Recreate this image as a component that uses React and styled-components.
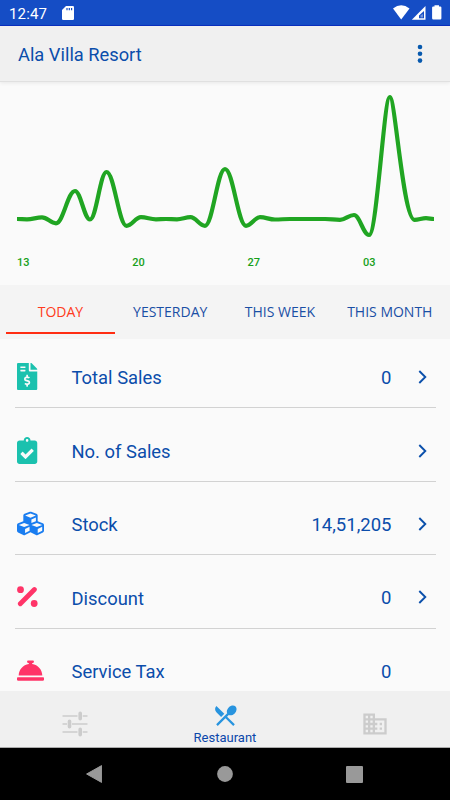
import React, { useState } from 'react';
import { FaClipboardCheck, FaConciergeBell, FaCubes, FaFileInvoiceDollar } from 'react-icons/fa';
import { MdBusiness, MdRestaurantMenu } from 'react-icons/md';
import styled, { createGlobalStyle } from 'styled-components';

const TABS = ['TODAY', 'YESTERDAY', 'THIS WEEK', 'THIS MONTH'];
const DATES = ['13', '20', '27', '03'];

// turning points of the sales curve: x, y, bend before, bend after
const POINTS = [
	[17, 137], [27, 137.3], [42, 135.4], [56, 141.3], [75, 109], [90, 137.5],
	[106.5, 90], [126.5, 143.8], [141, 135.2], [156, 137.3], [166, 137], [177, 137.3],
	[190.5, 135.2], [205, 143.8], [225, 87], [246, 143.8], [260, 135.2], [275, 137.5],
	[290, 137], [325, 137], [340, 137.9], [354, 133], [369, 153], [389.8, 15, 0.28, 0.22],
	[414.5, 137.8, 0.46], [426, 136.2], [434, 137],
];

const toPath = points =>
	points.reduce((path, [x, y, before = 0.38], i) => {
		if (i === 0) return `M${x} ${y}`;
		const [px, py, , after = 0.38] = points[i - 1];
		const dx = x - px;
		return `${path} C${px + dx * after} ${py} ${x - dx * before} ${y} ${x} ${y}`;
	}, '');

const PercentIcon = () => (
	<svg width="21" height="22" viewBox="0 0 21 22" fill="currentColor">
		<circle cx="3.5" cy="3.7" r="3.4" />
		<circle cx="17.2" cy="17.5" r="3.4" />
		<path d="M3.3 17.7 17.4 3.5" stroke="currentColor" strokeWidth="4.8" strokeLinecap="round" />
	</svg>
);

const SlidersIcon = () => (
	<svg width="26" height="26" viewBox="0 0 26 26" fill="none" stroke="currentColor">
		<path d="M.5 5H15.5M20.7 5H25.5M.5 13H5M10 13H25.5M.5 21H15.5M20.7 21H25.5" strokeWidth="1.5" />
		<path d="M18.2 2.2V7.8M7.5 10.2V15.8M18.2 18.2V23.8" strokeWidth="3.6" strokeLinecap="round" />
	</svg>
);

const iconProps = { size: 27, preserveAspectRatio: 'xMinYMid meet' };

const ROWS = [
	{ title: 'Total Sales', value: '0', color: '#1bc1ae', icon: <FaFileInvoiceDollar {...iconProps} />, arrow: true },
	{ title: 'No. of Sales', value: '', color: '#1bc1ae', icon: <FaClipboardCheck {...iconProps} />, arrow: true },
	{ title: 'Stock', value: '14,51,205', color: '#1a7df0', icon: <FaCubes {...iconProps} />, arrow: true },
	{ title: 'Discount', value: '0', color: '#ff3468', icon: <PercentIcon />, arrow: true },
	{ title: 'Service Tax', value: '0', color: '#ff3468', icon: <FaConciergeBell {...iconProps} />, arrow: false },
];

const GlobalStyle = createGlobalStyle`
	* {
		box-sizing: border-box;
	}
	body {
		margin: 0;
		font-family: Roboto, sans-serif;
	}
	svg {
		display: block;
		flex-shrink: 0;
	}
`;

const Screen = styled.div`
	width: 450px;
	height: 800px;
	display: flex;
	flex-direction: column;
	overflow: hidden;
	background: #fafafa;
	color: #0b4dab;
`;

const StatusBar = styled.div`
	height: 26px;
	flex-shrink: 0;
	display: flex;
	align-items: center;
	padding: 0 7px 0 9px;
	background: #154dc5;
	border-bottom: 1px solid #0a2fc0;
	color: #fff;
`;

const Clock = styled.span`
	width: 53px;
	font-size: 15px;
	line-height: 20px;
	padding-top: 2px;
	letter-spacing: 0.15px;
`;

const Signals = styled.svg`
	margin: 1px 0 0 auto;
`;

const AppBar = styled.header`
	position: relative;
	height: 56px;
	flex-shrink: 0;
	display: flex;
	align-items: center;
	justify-content: space-between;
	padding: 0 27px 0 18px;
	background: #f0f0f0;
	border-bottom: 1px solid #e0e0e0;
	box-shadow: 0 1px 4px rgba(0, 0, 0, 0.08);
`;

const Title = styled.h1`
	margin: 0;
	padding-top: 2px;
	font-size: 18.3px;
	line-height: 21px;
	font-weight: 400;
`;

const Chart = styled.section`
	height: 203px;
	flex-shrink: 0;
`;

const Dates = styled.div`
	display: flex;
	padding: 1px 0 0 17px;
`;

const DateLabel = styled.span`
	width: 115.3px;
	flex-shrink: 0;
	color: #17a01a;
	font-size: 11px;
	font-weight: 500;
	line-height: 16px;
`;

const Tabs = styled.nav`
	height: 54px;
	flex-shrink: 0;
	display: flex;
	padding: 0 5px 5px 5.5px;
	background: #f4f4f4;
`;

const Tab = styled.button`
	width: 109.8px;
	flex-shrink: 0;
	padding: 5px 0 0;
	border: 0;
	border-bottom: 2px solid ${({ $active }) => ($active ? '#ff2d12' : 'transparent')};
	background: none;
	color: ${({ $active }) => ($active ? '#ff3b20' : '#1a4fa5')};
	font-family: 'Open Sans', sans-serif;
	font-size: 14px;
	font-weight: 400;
	white-space: nowrap;
	cursor: pointer;
`;

const List = styled.div`
	flex: 1;
	min-height: 0;
	overflow: hidden;
	padding: 0 14px 0 15px;
`;

const Row = styled.div`
	height: 73.4px;
	display: flex;
	align-items: center;
	padding: 12px 0 0 2px;
	border-bottom: 1px solid #d2d2d2;

	&:first-child {
		height: 69.4px;
		padding-top: 7px;
	}
`;

const RowIcon = styled.div`
	width: 54.5px;
	color: ${({ $color }) => $color};
`;

const RowTitle = styled.span`
	flex: 1;
	padding-top: 2px;
	font-size: 18.4px;
`;

const RowValue = styled.span`
	padding-top: 2px;
	font-size: 18.5px;
`;

const Arrow = styled.div`
	width: 44.5px;
	padding-left: 26px;
`;

const BottomNav = styled.nav`
	height: 57px;
	flex-shrink: 0;
	display: flex;
	background: #f0f0f0;
	border-bottom: 1px solid #aaa;
`;

const NavItem = styled.div`
	flex: 1;
	display: flex;
	flex-direction: column;
	align-items: center;
	justify-content: ${({ $active }) => ($active ? 'flex-start' : 'center')};
	padding-top: ${({ $active }) => ($active ? '11px' : '10px')};
	color: ${({ $active }) => ($active ? '#2894df' : '#ccc')};
`;

const NavLabel = styled.span`
	padding-top: 1px;
	color: #0b47ab;
	font-size: 13px;
	line-height: 15px;
`;

const SystemBar = styled.div`
	height: 52px;
	flex-shrink: 0;
	display: flex;
	align-items: center;
	justify-content: space-between;
	padding: 0 87px 0 86px;
	background: #000;
`;

const App = () => {
	const [tab, setTab] = useState('TODAY');

	return (
		<Screen>
			<GlobalStyle />
			<StatusBar>
				<Clock>12:47</Clock>
				<svg width="12" height="14" viewBox="0 0 12 14">
					<path d="M4 0H10.8Q12 0 12 1.2V12.8Q12 14 10.8 14H1.2Q0 14 0 12.8V4Z" fill="#fff" />
					<path d="M5 2V4.3M7.3 2V4.3M9.6 2V4.3" stroke="#154dc5" strokeWidth="1.2" />
				</svg>
				<Signals width="50" height="16" viewBox="0 0 50 16">
					<path d="M0 3.5Q8.2-3 16.5 3.5L8.2 14.5Z" fill="#fff" />
					<path d="M32.5 1V14.7H18.8Z" fill="#fff" />
					<path d="M31 6V13.2H26V10.6Z" fill="#154dc5" />
					<path d="M30 9V12.6H27.5V10.2Z" fill="#fff" opacity=".4" />
					<path d="M41.5 1.4V.2H46V1.4H47.2Q48.4 1.4 48.4 2.6V13.3Q48.4 14.5 47.2 14.5H40.3Q39.1 14.5 39.1 13.3V2.6Q39.1 1.4 40.3 1.4Z" fill="#fff" />
				</Signals>
			</StatusBar>

			<AppBar>
				<Title>Ala Villa Resort</Title>
				<svg width="6" height="20" viewBox="0 0 6 20" fill="#0759ae">
					<circle cx="3" cy="3" r="2.3" />
					<circle cx="3" cy="9.8" r="2.3" />
					<circle cx="3" cy="16.6" r="2.3" />
				</svg>
			</AppBar>

			<Chart>
				<svg width="450" height="172" viewBox="0 0 450 172">
					<path d={toPath(POINTS)} fill="none" stroke="#20a522" strokeWidth="4.2" />
				</svg>
				<Dates>
					{DATES.map(date => (
						<DateLabel key={date}>{date}</DateLabel>
					))}
				</Dates>
			</Chart>

			<Tabs>
				{TABS.map(name => (
					<Tab key={name} $active={tab === name} onClick={() => setTab(name)}>
						{name}
					</Tab>
				))}
			</Tabs>

			<List>
				{ROWS.map(row => (
					<Row key={row.title}>
						<RowIcon $color={row.color}>{row.icon}</RowIcon>
						<RowTitle>{row.title}</RowTitle>
						<RowValue>{row.value}</RowValue>
						<Arrow>
							{row.arrow && (
								<svg width="9" height="14" viewBox="0 0 9 14">
									<path d="M1.3 1 7.3 7 1.3 13" fill="none" stroke="#0b50ab" strokeWidth="1.9" />
								</svg>
							)}
						</Arrow>
					</Row>
				))}
			</List>

			<BottomNav>
				<NavItem>
					<SlidersIcon />
				</NavItem>
				<NavItem $active>
					<MdRestaurantMenu size={27} />
					<NavLabel>Restaurant</NavLabel>
				</NavItem>
				<NavItem>
					<MdBusiness size={28} />
				</NavItem>
			</BottomNav>

			<SystemBar>
				<svg width="16" height="18" viewBox="0 0 16 18">
					<path d="M15.6 .6V17.4L.6 9Z" fill="#999" stroke="#999" strokeLinejoin="round" />
				</svg>
				<svg width="18" height="16" viewBox="0 0 18 16">
					<circle cx="10" cy="8" r="7.9" fill="#999" />
				</svg>
				<svg width="17" height="17" viewBox="0 0 17 17">
					<rect width="17" height="17" rx="1" fill="#999" />
				</svg>
			</SystemBar>
		</Screen>
	);
};

export default App;
